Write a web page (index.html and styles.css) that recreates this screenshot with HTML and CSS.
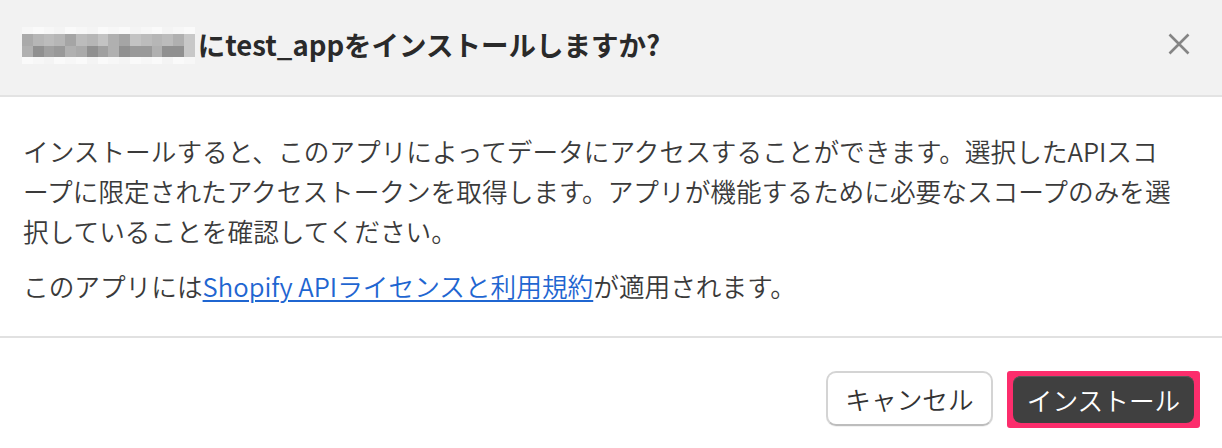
FILE: index.html
```html
<!DOCTYPE html>
<html lang="ja">
<head>
<meta charset="utf-8">
<title>test_appをインストールしますか?</title>
<link rel="stylesheet" href="styles.css">
</head>
<body>
<div class="modal">
  <header class="modal-header">
    <div class="title-row">
      <span class="mosaic" aria-hidden="true">
        <i class="l1"></i><i class="l2"></i><i class="l1"></i><i class="l3"></i><i class="l2"></i><i class="l1"></i><i class="l3"></i><i class="l2"></i><i class="l1"></i><i class="l2"></i><i class="l3"></i><i class="l1"></i><i class="l2"></i><i class="l3"></i><i class="l1"></i><i class="l2"></i>
        <i class="g3"></i><i class="g5"></i><i class="g6"></i><i class="g5"></i><i class="g2"></i><i class="g6"></i><i class="g5"></i><i class="g7"></i><i class="g4"></i><i class="g2"></i><i class="g7"></i><i class="g6"></i><i class="g5"></i><i class="g6"></i><i class="g4"></i><i class="g8"></i>
        <i class="g4"></i><i class="d1"></i><i class="d3"></i><i class="d2"></i><i class="g4"></i><i class="g3"></i><i class="d1"></i><i class="d3"></i><i class="g4"></i><i class="d1"></i><i class="d2"></i><i class="d2"></i><i class="g4"></i><i class="d1"></i><i class="d1"></i><i class="g8"></i>
        <i class="l2"></i><i class="l1"></i><i class="l3"></i><i class="l2"></i><i class="l1"></i><i class="l2"></i><i class="l3"></i><i class="l2"></i><i class="l1"></i><i class="l3"></i><i class="l2"></i><i class="l1"></i><i class="l2"></i><i class="l3"></i><i class="l2"></i><i class="l1"></i>
      </span>
      <h1 class="title">にtest_appをインストールしますか?</h1>
    </div>
    <button class="close" type="button" aria-label="閉じる">
      <svg viewBox="0 0 22 22" width="22" height="22">
        <path d="M1.5 1.5 L20.5 20.5 M20.5 1.5 L1.5 20.5" stroke="#858585" stroke-width="2.6" fill="none" stroke-linecap="butt"/>
      </svg>
    </button>
  </header>
  <section class="modal-body">
    <p>インストールすると、このアプリによってデータにアクセスすることができます。選択したAPIスコープに限定されたアクセストークンを取得します。アプリが機能するために必要なスコープのみを選択していることを確認してください。</p>
    <p>このアプリには<a href="#" class="link">Shopify APIライセンスと利用規約</a>が適用されます。</p>
  </section>
  <footer class="modal-footer">
    <button class="btn btn-secondary" type="button">キャンセル</button>
    <span class="highlight">
      <button class="btn btn-primary" type="button">インストール</button>
    </span>
  </footer>
</div>
</body>
</html>
```

FILE: styles.css
```css
* { box-sizing: border-box; }

html, body {
  margin: 0;
  padding: 0;
  background: #ffffff;
}

body {
  font-family: "Noto Sans CJK JP", "Noto Sans", sans-serif;
  color: #3a3a3a;
}

.modal {
  width: 1222px;
  height: 448px;
  display: flex;
  flex-direction: column;
  overflow: hidden;
}

.modal-header {
  height: 97px;
  flex: none;
  background: #f2f2f2;
  border-bottom: 2px solid #e3e3e3;
  display: flex;
  align-items: center;
  justify-content: space-between;
  padding: 0 32px 7px 22px;
}

.title-row {
  display: flex;
  align-items: center;
}

.mosaic {
  display: grid;
  grid-template-columns: repeat(16, 10.8px);
  grid-template-rows: 7px 12px 11px 7px;
  margin-right: 3px;
  margin-top: 2px;
}

.mosaic i { display: block; }
.mosaic .l1 { background: #f7f7f7; }
.mosaic .l2 { background: #fafafa; }
.mosaic .l3 { background: #f4f4f4; }
.mosaic .g2 { background: #a5a5a5; }
.mosaic .g3 { background: #aaaaaa; }
.mosaic .g4 { background: #b0b0b0; }
.mosaic .g5 { background: #b6b6b6; }
.mosaic .g6 { background: #bcbcbc; }
.mosaic .g7 { background: #c3c3c3; }
.mosaic .g8 { background: #c8c8c8; }
.mosaic .d1 { background: #909090; }
.mosaic .d2 { background: #999999; }
.mosaic .d3 { background: #a0a0a0; }

.title {
  margin: 0;
  font-size: 27.5px;
  line-height: 36px;
  font-weight: 700;
  color: #2a2a2a;
}

.close {
  border: 0;
  background: transparent;
  padding: 0;
  width: 22px;
  height: 22px;
  display: flex;
  cursor: pointer;
}

.modal-body {
  flex: none;
  padding: 34px 40px 30px 23px;
  border-bottom: 2px solid #e1e1e1;
}

.modal-body p {
  margin: 0;
  font-size: 25.67px;
  line-height: 39.8px;
  font-weight: 350;
}

.modal-body p + p {
  margin-top: 16px;
}

.link {
  color: #1f66d1;
  text-decoration: underline;
  text-underline-offset: 3px;
  text-decoration-thickness: 2px;
}

.modal-footer {
  flex: 1;
  display: flex;
  justify-content: flex-end;
  align-items: flex-start;
  gap: 14px;
  padding: 33px 22px 0 0;
}

.btn {
  font-family: inherit;
  font-size: 25.67px;
  line-height: 1;
  font-weight: 350;
  cursor: pointer;
}

.btn-secondary {
  width: 167px;
  height: 55px;
  background: #ffffff;
  color: #333333;
  border: 2px solid #d4d4d4;
  border-bottom-color: #bdbdbd;
  border-radius: 10px;
  box-shadow: 0 1px 0 rgba(0,0,0,0.05);
}

.highlight {
  display: flex;
  border-style: solid;
  border-color: #fc2d6c;
  border-width: 5px 6px;
  border-radius: 3px;
  background: #fc2d6c;
}

.btn-primary {
  width: 181px;
  height: 47px;
  background: #404040;
  color: #ffffff;
  border: 0;
  border-radius: 8px;
  box-shadow: inset 0 1px 0 #5a5a5a;
}
```
